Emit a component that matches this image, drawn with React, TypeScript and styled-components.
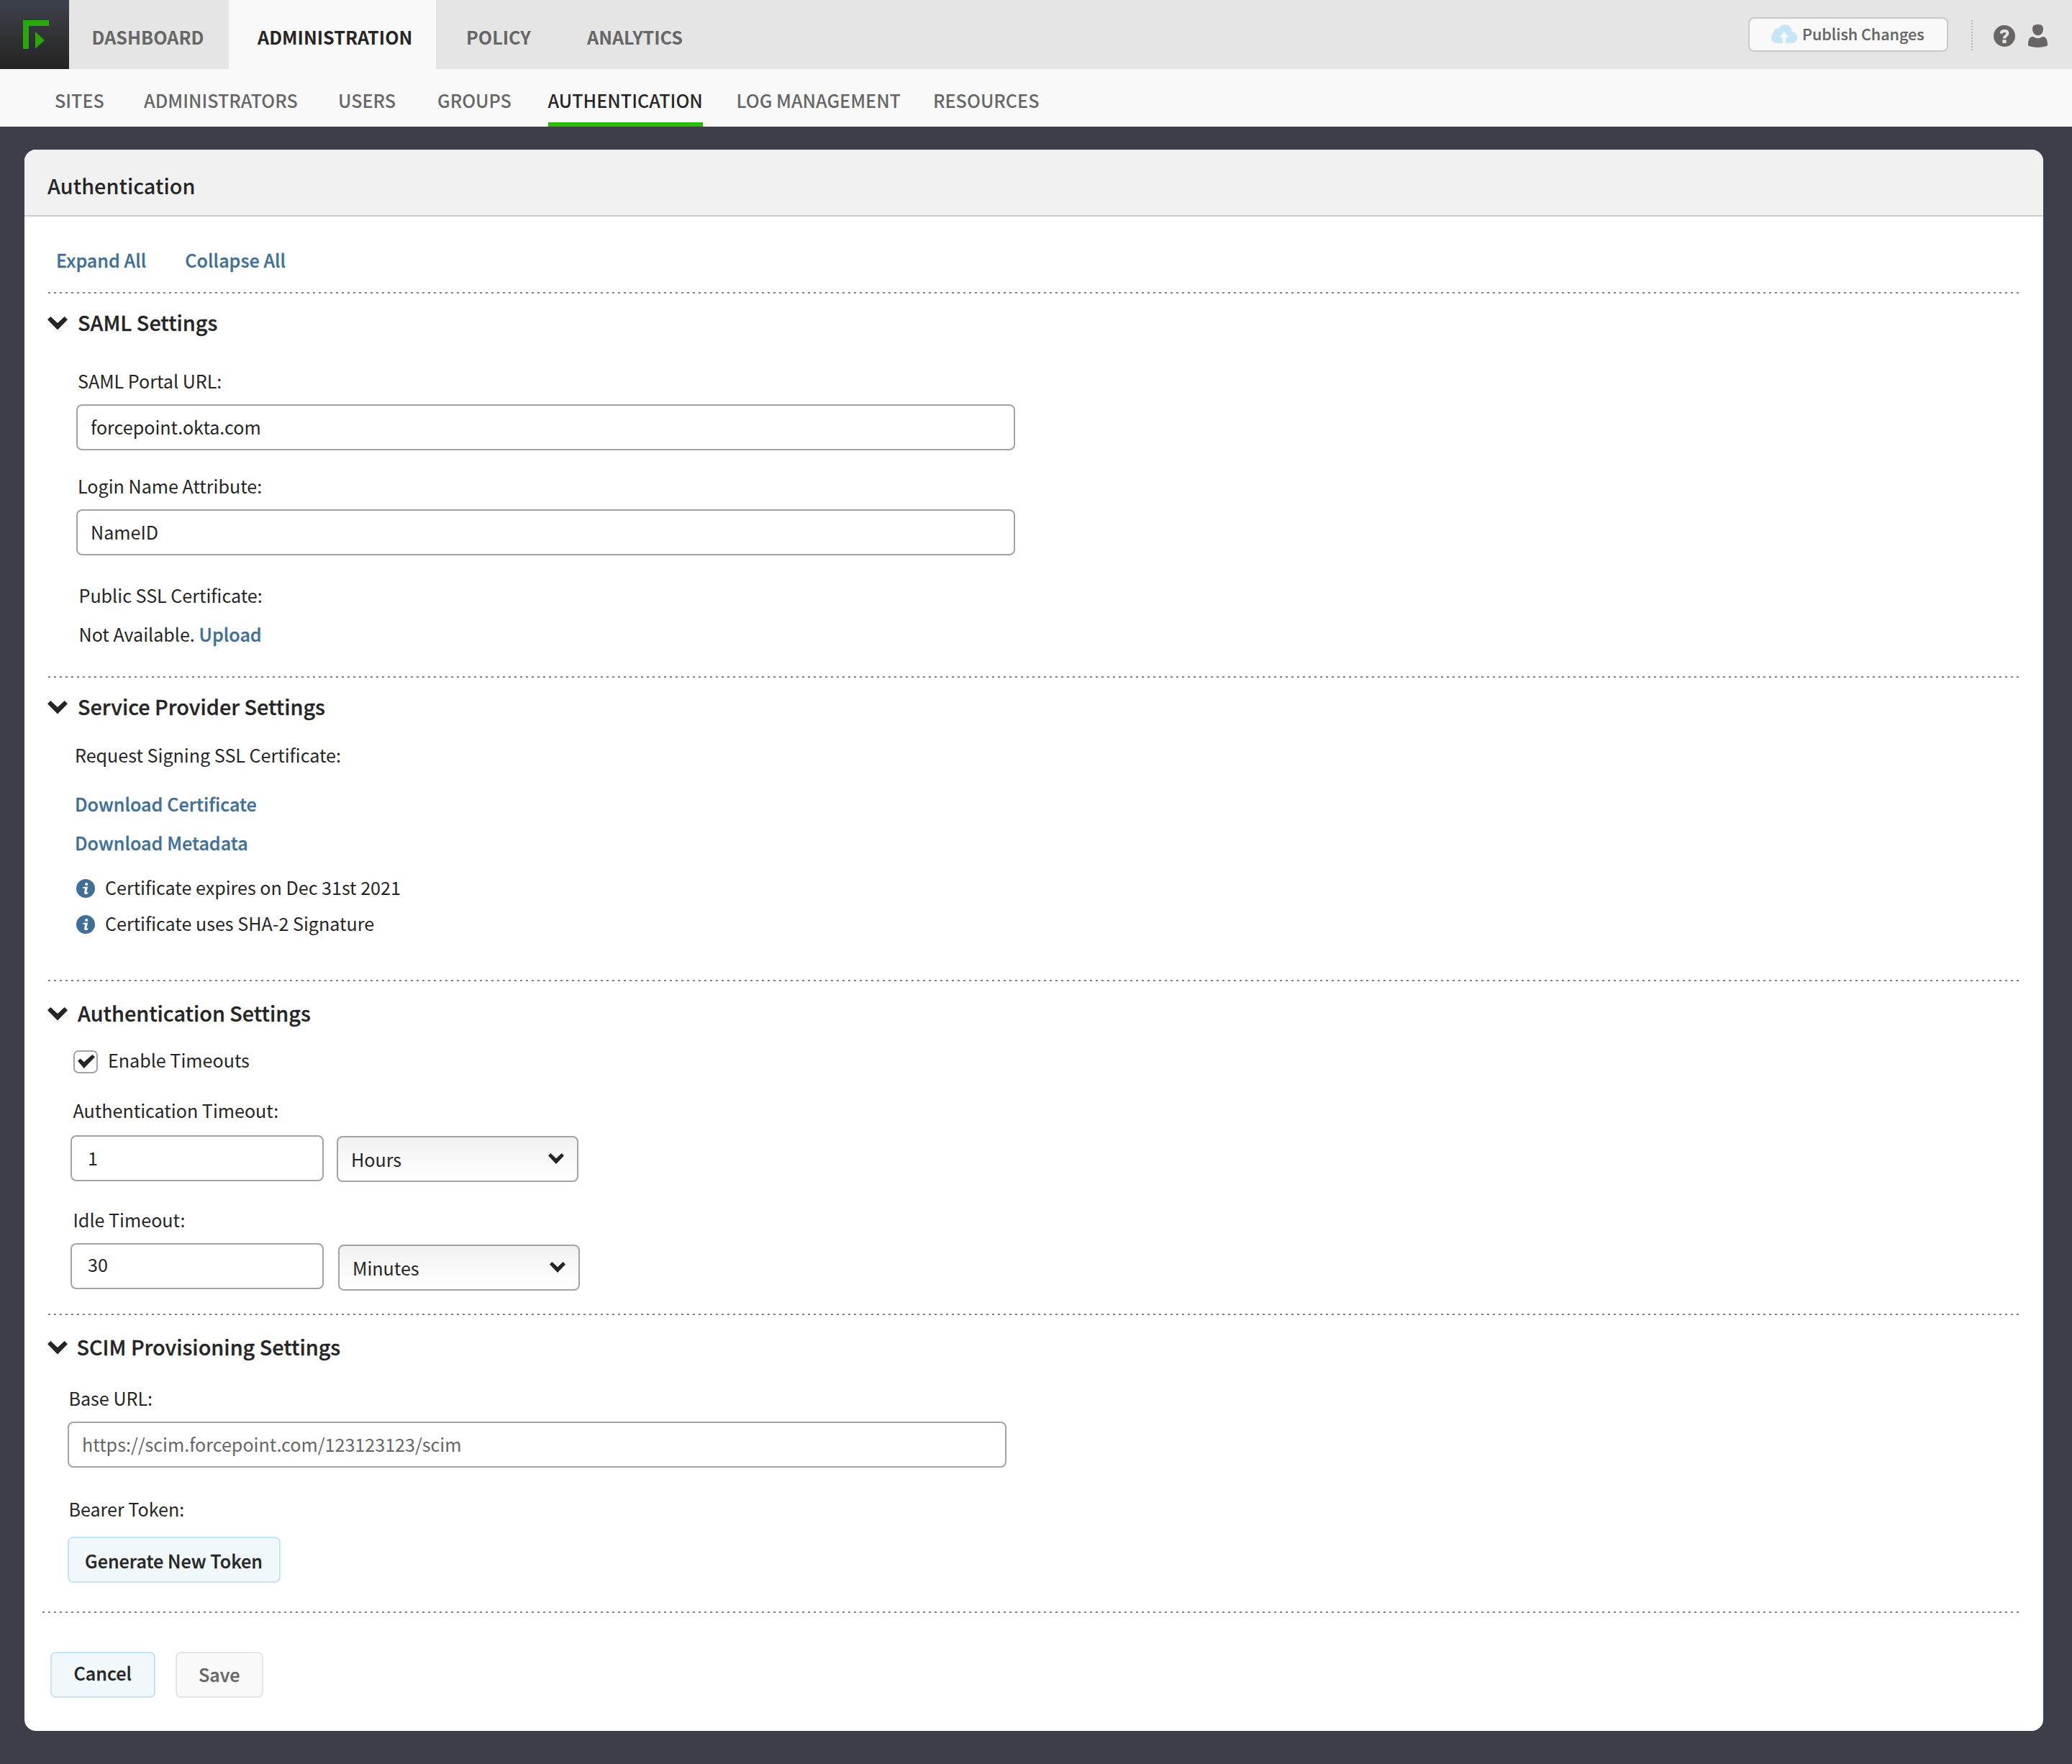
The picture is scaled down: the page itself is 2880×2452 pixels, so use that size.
import React from 'react'
import styled, { createGlobalStyle } from 'styled-components'

const GlobalStyle = createGlobalStyle`
    * {
        box-sizing: border-box;
    }
    body {
        margin: 0;
        background: #3c3f48;
        color: #252525;
        font-family: 'Noto Sans CJK SC', 'Noto Sans', sans-serif;
        font-size: 25.1px;
        line-height: 40px;
    }
    input, button {
        font: inherit;
        color: inherit;
        outline: none;
    }
    svg {
        display: block;
        flex-shrink: 0;
    }
`

const TopBar = styled.header`
    display: flex;
    height: 96px;
    background: #e5e5e5;
`
const Logo = styled.div`
    width: 96px;
    padding: 28px 0 0 32px;
    background: linear-gradient(#3d414a, #252423);
`
const Tab = styled.a<{ $active?: boolean, $width: number, $indent: number }>`
    width: ${props => props.$width}px;
    padding: 31px 0 0 ${props => props.$indent}px;
    background: ${props => props.$active ? `#f9f9f9` : `transparent`};
    color: ${props => props.$active ? `#252525` : `#666`};
    font-weight: 700;
    letter-spacing: .05px;
    white-space: nowrap;
`
const FlexGrow = styled.div`
    flex-grow: 1;
`
const PublishButton = styled.button`
    display: flex;
    width: 278px;
    height: 48px;
    margin-top: 24px;
    padding: 0 0 0 30px;
    border: 2px solid #c9c9c9;
    border-radius: 8px;
    background: #f9f9f9;
    color: #666;
    font-size: 21.5px;
    font-weight: 500;
    line-height: 42px;
    gap: 7px;
    -webkit-text-stroke: .2px;
    > svg {
        margin-top: 8px;
    }
`
const DottedSeparator = styled.div`
    width: 2px;
    height: 42px;
    margin: 28px 29px 0 32px;
    background: repeating-linear-gradient(#b5b5b5 0 2px, transparent 2px 4px);
`
const TopIcons = styled.div`
    display: flex;
    gap: 18px;
    padding: 34px 34px 0 0;
    > :first-child {
        margin-top: 1px;
    }
`

const SubNav = styled.nav`
    display: grid;
    grid-template-columns: 124px 270px 138px 153.5px 262px 273.5px auto;
    justify-items: start;
    height: 80px;
    padding-left: 76px;
    background: #f9f9f9;
`
const SubTab = styled.a<{ $active?: boolean }>`
    padding-top: 23px;
    color: ${props => props.$active ? `#252525` : `#666`};
    border-bottom: 6px solid ${props => props.$active ? `#2dba09` : `transparent`};
    font-weight: 500;
    letter-spacing: .05px;
`

const Panel = styled.main`
    margin: 32px 40px 46px 34px;
    padding-bottom: 46px;
    border-radius: 16px;
    background: #fff;
    overflow: hidden;
`
const PanelTitle = styled.h1`
    height: 93px;
    margin: 0;
    padding: 30px 0 0 32px;
    border-bottom: 2px solid #ccc;
    background: #f1f1f1;
    font-size: 28.8px;
    font-weight: 500;
    line-height: 40px;
    letter-spacing: .05px;
`
const Divider = styled.div<{ $top: number, $wide?: boolean }>`
    height: 2px;
    margin: ${props => props.$top}px 34px 0 ${props => props.$wide ? 25 : 33}px;
    background: repeating-linear-gradient(90deg, #808080 0 3px, transparent 3px 8px);
`
const Toolbar = styled.div`
    display: flex;
    gap: 54px;
    padding: 40px 0 0 44px;
`
const Link = styled.a`
    color: #3f6f96;
    font-weight: 500;
    letter-spacing: .05px;
    -webkit-text-stroke: .3px;
`
const Heading = styled.h2<{ $top: number, $outdent?: boolean }>`
    display: flex;
    gap: ${props => props.$outdent ? 13 : 14}px;
    margin: ${props => props.$top}px 0 0 ${props => props.$outdent ? 31.5 : 32}px;
    font-size: 28.8px;
    font-weight: 500;
    line-height: 40px;
    -webkit-text-stroke: .3px;
    > svg {
        margin-top: 12px;
    }
`
const Row = styled.div<{ $top: number, $left: number }>`
    display: flex;
    align-items: flex-start;
    margin: ${props => props.$top}px 0 0 ${props => props.$left}px;
    white-space: pre;
`
const TextInput = styled.input<{ $width: number, $pad?: number, $low?: number, $muted?: boolean }>`
    width: ${props => props.$width}px;
    height: 64px;
    padding: 0 17px ${props => props.$low ?? 2}px ${props => props.$pad ?? 18}px;
    border: 2px solid #a3a3a3;
    border-radius: 8px;
    background: #fff;
    color: ${props => props.$muted ? `#666` : `#252525`};
`
const Select = styled.div<{ $top: number, $gap: number }>`
    display: flex;
    justify-content: space-between;
    width: 336px;
    height: 64px;
    margin: ${props => props.$top}px 0 0 ${props => props.$gap}px;
    padding: 10px 18px 0;
    border: 2px solid #a3a3a3;
    border-radius: 8px;
    background: linear-gradient(#f1f1f1, #fff);
    > svg {
        margin-top: 12px;
    }
`
const Checkbox = styled.div`
    width: 34px;
    height: 32px;
    margin: 7px 14px 0 0;
    padding: 4px;
    border: 2px solid #a3a3a3;
    border-radius: 7px;
`
const InfoBadge = styled.svg`
    margin: 9px 14px 0 0;
`
const Button = styled.button<{ $width: number, $textTop: number, $indent: number, $disabled?: boolean }>`
    width: ${props => props.$width}px;
    height: 64px;
    padding: ${props => props.$textTop}px 0 ${props => 20 - props.$textTop}px ${props => props.$indent}px;
    border: 2px solid ${props => props.$disabled ? `#e5e5e5` : `#c3e4f6`};
    border-radius: 8px;
    background: ${props => props.$disabled ? `#f9f9f9` : `#f1f8fc`};
    color: ${props => props.$disabled ? `#666` : `#252525`};
    font-weight: 500;
    letter-spacing: .05px;
    text-align: left;
    -webkit-text-stroke: .3px;
`
const Footer = styled.div`
    display: flex;
    gap: 28px;
    padding: 54px 0 0 36px;
`

const Chevron = ({ width = 28, height = 18.5 }: { width?: number, height?: number }) =>
    <svg width={width} height={height} viewBox="0 0 28 18.5" preserveAspectRatio="none">
        <path d="M0 4.2 4.3 0 14 9 23.7 0 28 4.2 14 18.4Z" fill="#252525" />
    </svg>

const InfoIcon = () => <InfoBadge width="26" height="26" viewBox="0 0 26 26">
    <circle cx="13" cy="13" r="13" fill="#3f6f96" />
    <circle cx="14.2" cy="7" r="2.1" fill="#fff" />
    <path d="M9.3 11 16 10.5 14.4 17.8C14.2 19 15 19 16.6 18.3L16.3 20C14 21.3 10.8 21.4 11.1 18.6L12.2 13 9.2 12.6Z" fill="#fff" />
</InfoBadge>

const subTabs = ['SITES', 'ADMINISTRATORS', 'USERS', 'GROUPS', 'AUTHENTICATION', 'LOG MANAGEMENT', 'RESOURCES']

const Header = () => <>
    <TopBar>
        <Logo>
            <svg width="36" height="40" viewBox="0 0 36 40" fill="#2aa80b">
                <path d="M0 0H36V8H8V40H0Z" />
                <path d="M17 16 30 28 17 39.5Z" />
            </svg>
        </Logo>
        <Tab $width={222} $indent={31.5}>DASHBOARD</Tab>
        <Tab $width={288} $indent={40} $active>ADMINISTRATION</Tab>
        <Tab $width={210} $indent={42}>POLICY</Tab>
        <Tab $width={180} $indent={0}>ANALYTICS</Tab>
        <FlexGrow />
        <PublishButton>
            <svg width="36" height="26" viewBox="0 0 36 26">
                <g fill="#c6e6f8">
                    <circle cx="19" cy="10" r="10" />
                    <circle cx="9" cy="11.5" r="6" />
                    <circle cx="8" cy="18" r="8" />
                    <circle cx="28" cy="18" r="8" />
                    <path d="M8 12H28V26H8Z" />
                </g>
                <path d="M18 10 24.2 18H20.3V26H15.7V18H11.8Z" fill="#f9f9f9" />
            </svg>
            Publish Changes
        </PublishButton>
        <DottedSeparator />
        <TopIcons>
            <svg width="30" height="30" viewBox="0 0 30 30">
                <circle cx="15" cy="15" r="15" fill="#696565" />
                <path d="M10.6 11.6C11 8.8 13 8 15 8 17.8 8 19.4 9.3 19.4 11.4 19.4 14.6 15 14.6 15 18.6" fill="none" stroke="#e5e5e5" strokeWidth="4" />
                <path d="M12.4 20.2H17.6V25H12.4Z" fill="#e5e5e5" />
            </svg>
            <svg width="27" height="32" viewBox="0 0 27 32" fill="#696565">
                <path d="M13.5 0C18.5 0 21 2 21 6 21 11 18 15.3 13.5 15.3S6 11 6 6C6 2 8.5 0 13.5 0Z" />
                <path d="M6.5 17C9 17.5 10 19.3 13.5 19.3S18 17.5 20.5 17C25.5 17.5 27 21 27 29.5 19 32.8 8 32.8 0 29.5 0 21 1.5 17.5 6.5 17Z" />
            </svg>
        </TopIcons>
    </TopBar>
    <SubNav>
        {subTabs.map(t => <SubTab key={t} $active={t === 'AUTHENTICATION'}>{t}</SubTab>)}
    </SubNav>
</>

export default function App() {
    return <>
        <GlobalStyle />
        <Header />
        <Panel>
            <PanelTitle>Authentication</PanelTitle>
            <Toolbar>
                <Link>Expand All</Link>
                <Link>Collapse All</Link>
            </Toolbar>

            <Divider $top={25} />
            <Heading $top={20}><Chevron />SAML Settings</Heading>
            <Row $top={41} $left={74}>SAML Portal URL:</Row>
            <Row $top={13} $left={72}><TextInput $width={1305} defaultValue="forcepoint.okta.com" /></Row>
            <Row $top={29} $left={74}>Login Name Attribute:</Row>
            <Row $top={13} $left={72}><TextInput $width={1305} defaultValue="NameID" /></Row>
            <Row $top={35} $left={75.5}>Public SSL Certificate:</Row>
            <Row $top={14} $left={75.5}>Not Available. <Link>Upload</Link></Row>

            <Divider $top={39} />
            <Heading $top={20}><Chevron />Service Provider Settings</Heading>
            <Row $top={27} $left={70}>Request Signing SSL Certificate:</Row>
            <Row $top={28} $left={70}><Link>Download Certificate</Link></Row>
            <Row $top={14} $left={70}><Link>Download Metadata</Link></Row>
            <Row $top={22} $left={72}><InfoIcon />Certificate expires on Dec 31st 2021</Row>
            <Row $top={10} $left={72}><InfoIcon />Certificate uses SHA-2 Signature</Row>

            <Divider $top={59} />
            <Heading $top={24}><Chevron />Authentication Settings</Heading>
            <Row $top={25} $left={68}>
                <Checkbox>
                    <svg width="24" height="19" viewBox="0 0 24 19">
                        <path d="M0 8.7 3.7 5.5 8.7 10.3 20.3 0 24 3.2 8.7 19Z" fill="#252525" />
                    </svg>
                </Checkbox>
                Enable Timeouts
            </Row>
            <Row $top={30} $left={67.5}>Authentication Timeout:</Row>
            <Row $top={15} $left={64}>
                <TextInput $width={352} $pad={22} defaultValue="1" />
                <Select $top={1} $gap={18}>Hours<Chevron width={22} height={15} /></Select>
            </Row>
            <Row $top={32} $left={67.5}>Idle Timeout:</Row>
            <Row $top={13} $left={64}>
                <TextInput $width={352} $pad={22} $low={6} defaultValue="30" />
                <Select $top={2} $gap={20}>Minutes<Chevron width={22} height={15} /></Select>
            </Row>

            <Divider $top={32} />
            <Heading $top={24} $outdent><Chevron />SCIM Provisioning Settings</Heading>
            <Row $top={31} $left={61.5}>Base URL:</Row>
            <Row $top={13} $left={60}><TextInput $width={1305} $muted defaultValue="https://scim.forcepoint.com/123123123/scim" /></Row>
            <Row $top={37} $left={61.5}>Bearer Token:</Row>
            <Row $top={19} $left={60}><Button $width={296} $textTop={11} $indent={22}>Generate New Token</Button></Row>

            <Divider $top={40} $wide />
            <Footer>
                <Button $width={146} $textTop={7} $indent={30.5}>Cancel</Button>
                <Button $width={122} $textTop={9} $indent={30}  $disabled>Save</Button>
            </Footer>
        </Panel>
    </>
}
